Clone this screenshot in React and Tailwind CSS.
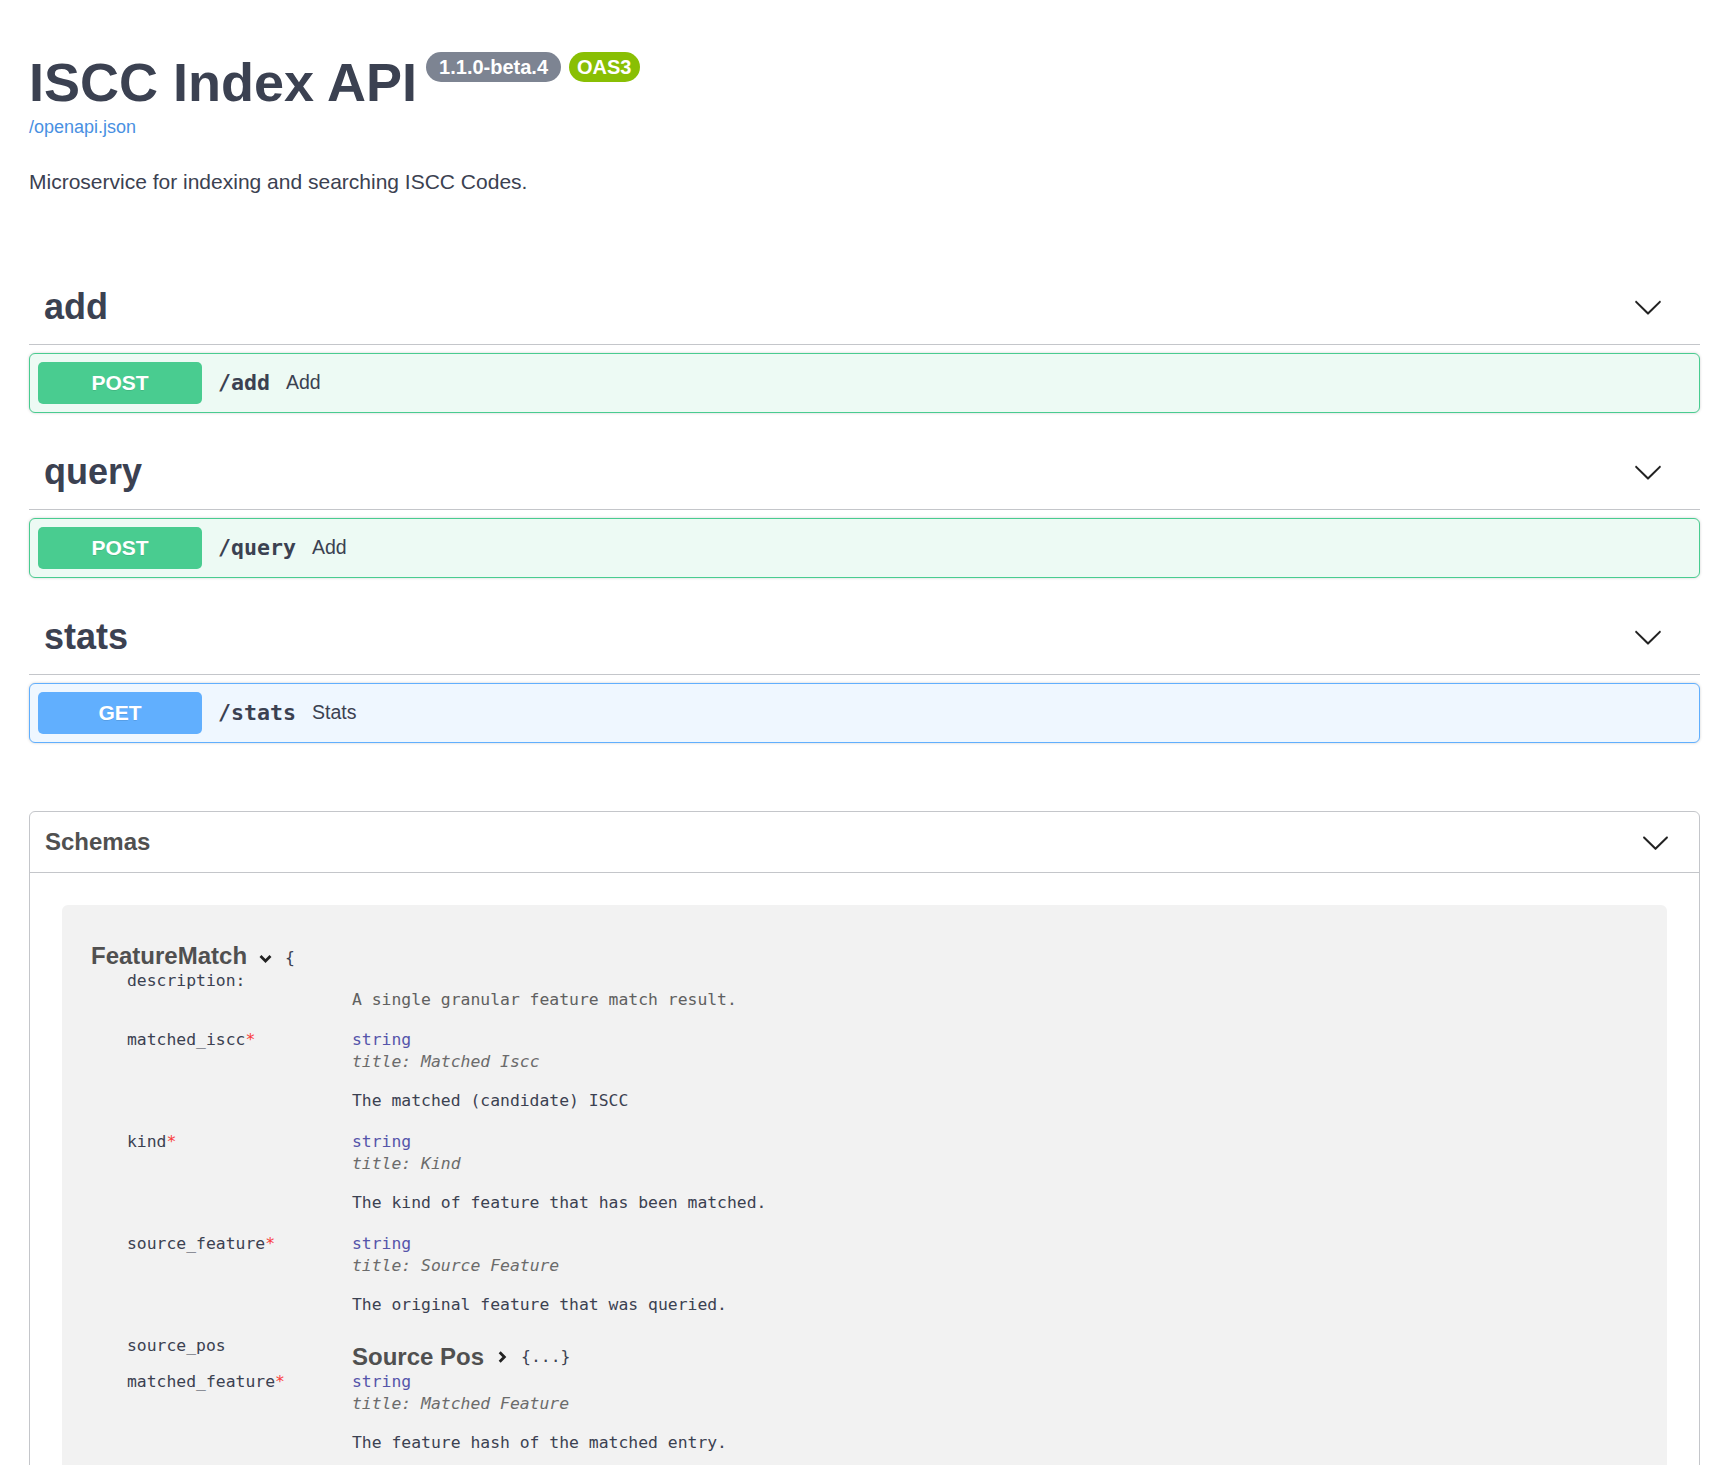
const sans = { fontFamily: '"Liberation Sans", Arial, sans-serif' }

const Chevron = ({ className }) => (
  <svg viewBox="0 0 20 20" className={className} fill="currentColor">
    <path d="M17.418 6.109c.272-.268.709-.268.979 0s.271.701 0 .969l-7.908 7.83c-.27.268-.707.268-.979 0l-7.908-7.83c-.27-.268-.27-.701 0-.969.271-.268.709-.268.979 0L10 13.25l7.418-7.141z" />
  </svg>
)

const tags = [
  { name: 'add', method: 'POST', path: '/add', summary: 'Add' },
  { name: 'query', method: 'POST', path: '/query', summary: 'Add' },
  { name: 'stats', method: 'GET', path: '/stats', summary: 'Stats' },
]

const props = [
  { key: 'matched_iscc', title: 'Matched Iscc', desc: 'The matched (candidate) ISCC' },
  { key: 'kind', title: 'Kind', desc: 'The kind of feature that has been matched.' },
  { key: 'source_feature', title: 'Source Feature', desc: 'The original feature that was queried.' },
]

const OpBlock = ({ method, path, summary }) => {
  const isGet = method === 'GET'
  return (
    <div
      className={`flex items-center rounded-[6px] border p-[8px] shadow-[0_0_3px_rgba(0,0,0,0.19)] ${
        isGet ? 'border-[#61affe] bg-[#eff7ff]' : 'border-[#49cc90] bg-[#edfaf4]'
      }`}
    >
      <span
        className={`w-[164px] rounded-[5px] py-[9px] text-center text-[21px] font-bold leading-[24px] text-white ${
          isGet ? 'bg-[#61affe]' : 'bg-[#49cc90]'
        }`}
        style={{ ...sans, textShadow: '0 1px 0 rgba(0,0,0,.1)' }}
      >
        {method}
      </span>
      <span
        className="px-[16px] text-[21.6px] font-bold text-[#3b4151]"
        style={{ fontFamily: '"DejaVu Sans Mono", monospace' }}
      >
        {path}
      </span>
      <span className="text-[19.5px] text-[#3b4151]" style={sans}>
        {summary}
      </span>
    </div>
  )
}

const Key = ({ children, required }) => (
  <div className="w-[225px] shrink-0 text-[#3b4151]">
    {children}
    {required && <span className="text-[#f93e3e]">*</span>}
  </div>
)

export default function App() {
  const mono = { fontFamily: '"DejaVu Sans Mono", monospace' }
  return (
    <div className="min-h-screen bg-white px-[29px] pb-[40px] text-[#3b4151]" style={sans}>
      {/* info */}
      <div className="pt-[55px]">
        <div className="flex items-start">
          <h2 className="text-[54px] font-bold leading-none text-[#3b4151]">ISCC Index API</h2>
          <span className="ml-[9px] mt-[-3px] rounded-full bg-[#7d8492] px-[13px] text-[20px] font-bold leading-[30px] text-white">
            1.1.0-beta.4
          </span>
          <span className="ml-[8px] mt-[-3px] rounded-full bg-[#89bf04] px-[8px] text-[20px] font-bold leading-[30px] text-white">
            OAS3
          </span>
        </div>
        <a className="mt-[8px] block text-[18px] leading-[21px] text-[#4990e2]">/openapi.json</a>
        <p className="mt-[28px] text-[21px] leading-[31px] text-[#3b4151]">
          Microservice for indexing and searching ISCC Codes.
        </p>
      </div>

      {/* tags */}
      <div className="mt-[72px]">
        {tags.map((t) => (
          <div key={t.name}>
            <h3 className="flex h-[76px] items-center justify-between border-b border-[rgba(59,65,81,0.3)] pl-[15px] pr-[37px] text-[36px] font-bold text-[#3b4151]">
              <span>{t.name}</span>
              <Chevron className="h-[30px] w-[30px] text-[#222]" />
            </h3>
            <div className="mb-[21px] mt-[8px]">
              <OpBlock method={t.method} path={t.path} summary={t.summary} />
            </div>
          </div>
        ))}
      </div>

      {/* schemas */}
      <section className="mt-[68px] rounded-[6px] border border-[rgba(59,65,81,0.3)]">
        <h4 className="flex h-[61px] items-center justify-between border-b border-[rgba(59,65,81,0.3)] pl-[15px] pr-[29px] text-[24px] font-bold text-[#505050]">
          <span>Schemas</span>
          <Chevron className="h-[29px] w-[29px] text-[#222]" />
        </h4>
        <div className="mx-[32px] mb-[22px] mt-[32px] rounded-[6px] bg-[#f2f2f2] pb-[30px] pl-[29px] pt-[37px]">
          <div className="flex items-center text-[24px] font-bold leading-[24px] text-[#505050]">
            <span>FeatureMatch</span>
            <svg viewBox="0 0 12 12" className="ml-[11px] mt-[4px] h-[15px] w-[15px]" fill="none" stroke="#222" strokeWidth="2.2">
              <polyline points="2,4 6,8 10,4" />
            </svg>
            <span className="ml-[12px] mt-[4px] text-[16.4px] font-normal text-[#3b4151]" style={mono}>
              {'{'}
            </span>
          </div>

          <div className="pl-[36px] text-[16.4px] leading-[22px]" style={mono}>
            {/* description */}
            <div className="mb-[18px] flex">
              <Key>description:</Key>
              <div className="pt-[19px] text-[#606060]">A single granular feature match result.</div>
            </div>

            {props.map((p) => (
              <div key={p.key} className="mb-[19px] flex">
                <Key required>{p.key}</Key>
                <div>
                  <div className="text-[#55a]">string</div>
                  <div className="italic text-[#6b6b6b]">title: {p.title}</div>
                  <div className="mt-[17px] text-[#3b4151]">{p.desc}</div>
                </div>
              </div>
            ))}

            <div className="flex">
              <Key>source_pos</Key>
              <div className="flex items-center pt-[8px]">
                <span className="text-[24px] font-bold leading-[28px] text-[#505050]" style={sans}>
                  Source Pos
                </span>
                <svg viewBox="0 0 12 12" className="ml-[11px] h-[14px] w-[14px]" fill="none" stroke="#222" strokeWidth="2.4">
                  <polyline points="4,2 8,6 4,10" />
                </svg>
                <span className="ml-[12px] text-[#3b4151]">{'{...}'}</span>
              </div>
            </div>

            <div className="mb-[18px] flex">
              <Key required>matched_feature</Key>
              <div>
                <div className="text-[#55a]">string</div>
                <div className="italic text-[#6b6b6b]">title: Matched Feature</div>
                <div className="mt-[17px] text-[#3b4151]">The feature hash of the matched entry.</div>
              </div>
            </div>
          </div>
        </div>
      </section>
    </div>
  )
}
